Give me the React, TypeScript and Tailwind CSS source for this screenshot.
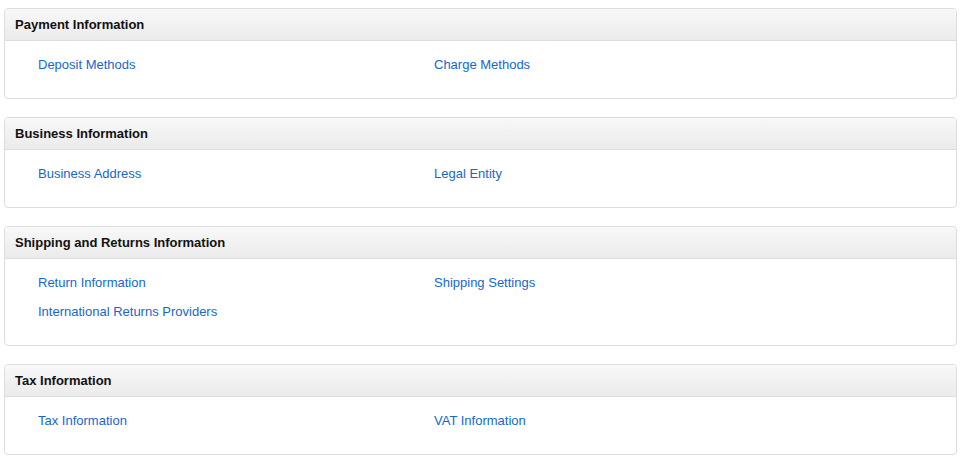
import React from "react";

type Section = { title: string; rows: [string, string?][] };

const sections: Section[] = [
  { title: "Payment Information", rows: [["Deposit Methods", "Charge Methods"]] },
  { title: "Business Information", rows: [["Business Address", "Legal Entity"]] },
  {
    title: "Shipping and Returns Information",
    rows: [["Return Information", "Shipping Settings"], ["International Returns Providers"]],
  },
  { title: "Tax Information", rows: [["Tax Information", "VAT Information"]] },
];

export default function App() {
  return (
    <div
      className="min-h-[461px] bg-white pt-[8px] px-[4px]"
      style={{ fontFamily: '"Liberation Sans", Arial, sans-serif' }}
    >
      {sections.map((s) => (
        <div
          key={s.title}
          className="mb-[18px] rounded-[4px] border border-[#dddddd] bg-white overflow-hidden"
        >
          <div className="h-[32px] flex items-center pl-[10px] border-b border-[#dddddd] bg-gradient-to-b from-[#f8f8f8] to-[#ebebeb] text-[13px] font-bold text-[#111111]">
            {s.title}
          </div>
          <div className="pt-[9px] pb-[19px] pl-[33px]">
            {s.rows.map((r, i) => (
              <div key={i} className="grid grid-cols-[396px_1fr] h-[29px] items-center text-[13px]">
                <a className="text-[#1767c9] cursor-pointer w-fit">{r[0]}</a>
                {r[1] ? <a className="text-[#1767c9] cursor-pointer w-fit">{r[1]}</a> : <span />}
              </div>
            ))}
          </div>
        </div>
      ))}
    </div>
  );
}
